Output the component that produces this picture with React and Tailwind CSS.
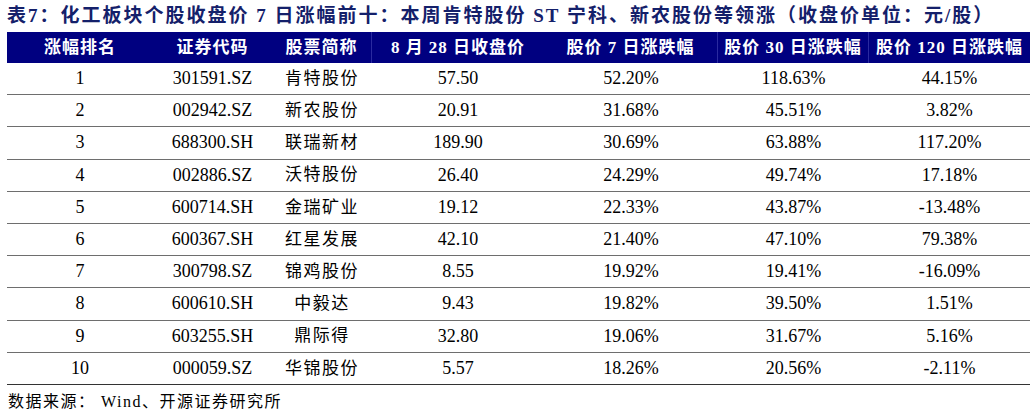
import React from "react";

const rows = [
  ["1", "301591.SZ", "肯特股份", "57.50", "52.20%", "118.63%", "44.15%"],
  ["2", "002942.SZ", "新农股份", "20.91", "31.68%", "45.51%", "3.82%"],
  ["3", "688300.SH", "联瑞新材", "189.90", "30.69%", "63.88%", "117.20%"],
  ["4", "002886.SZ", "沃特股份", "26.40", "24.29%", "49.74%", "17.18%"],
  ["5", "600714.SH", "金瑞矿业", "19.12", "22.33%", "43.87%", "-13.48%"],
  ["6", "600367.SH", "红星发展", "42.10", "21.40%", "47.10%", "79.38%"],
  ["7", "300798.SZ", "锦鸡股份", "8.55", "19.92%", "19.41%", "-16.09%"],
  ["8", "600610.SH", "中毅达", "9.43", "19.82%", "39.50%", "1.51%"],
  ["9", "603255.SH", "鼎际得", "32.80", "19.06%", "31.67%", "5.16%"],
  ["10", "000059.SZ", "华锦股份", "5.57", "18.26%", "20.56%", "-2.11%"],
];

const headers = [
  "涨幅排名",
  "证券代码",
  "股票简称",
  "8 月 28 日收盘价",
  "股价 7 日涨跌幅",
  "股价 30 日涨跌幅",
  "股价 120 日涨跌幅",
];

const sepAfter = [false, false, true, false, true, true, false];

const font = { fontFamily: '"Liberation Serif", "Noto Sans CJK SC", serif' };

export default function App() {
  return (
    <div className="w-[1036px] h-[415px] bg-white overflow-hidden" style={font}>
      <div className="pl-[7px] pt-[4px] h-[32px] text-[19px] leading-[24px] font-bold text-[#14206a] whitespace-nowrap tracking-[2px]">
        表7：化工板块个股收盘价 7 日涨幅前十：本周肯特股份 ST 宁科、新农股份等领涨（收盘价单位：元/股）
      </div>
      <div className="ml-[7px] w-[1023px]">
        <div className="grid grid-cols-[146px_119px_100px_172px_174px_151px_161px] h-[31px] bg-[#000080] text-white font-bold text-[17px]">
          {headers.map((h, i) => (
            <div
              key={i}
              className={
                "flex items-center justify-center whitespace-nowrap tracking-[1px] " +
                (sepAfter[i] ? "border-r border-[#2a2aa0]" : "")
              }
            >
              {h}
            </div>
          ))}
        </div>
        {rows.map((r, ri) => (
          <div
            key={ri}
            className={
              "grid grid-cols-[146px_119px_100px_172px_174px_151px_161px] h-[32.2px] text-[18px] text-black border-b " +
              (ri === rows.length - 1 ? "border-[#333333]" : "border-[#6e6e6e]")
            }
          >
            {r.map((c, ci) => (
              <div
                key={ci}
                className={
                  "flex items-center justify-center whitespace-nowrap " +
                  (ci === 2 ? "tracking-[1.5px] text-[17px]" : "")
                }
              >
                {c}
              </div>
            ))}
          </div>
        ))}
      </div>
      <div className="pl-[8px] pt-[7px] text-[16px] leading-[20px] text-black whitespace-nowrap tracking-[1.5px]">
        数据来源： Wind、开源证券研究所
      </div>
    </div>
  );
}
